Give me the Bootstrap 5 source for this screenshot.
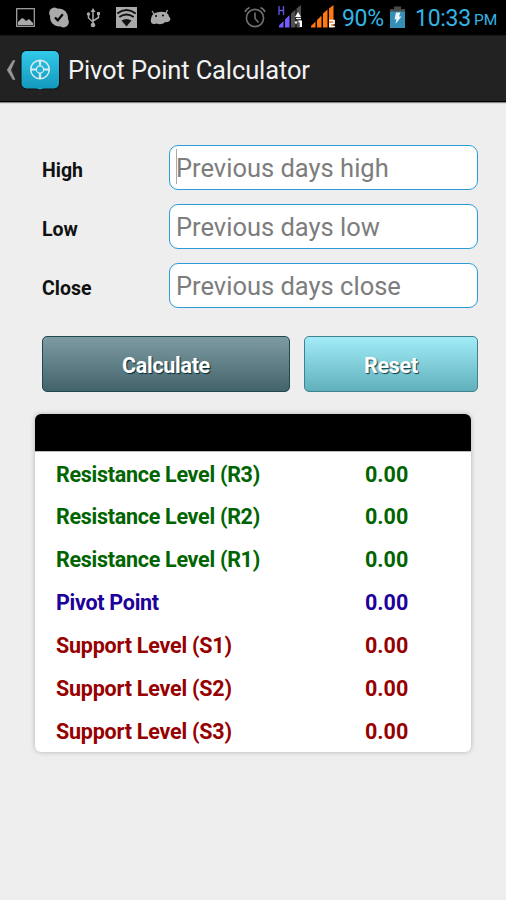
<!DOCTYPE html>
<html lang="en">
<head>
<meta charset="utf-8">
<meta name="viewport" content="width=device-width, initial-scale=1">
<title>Pivot Point Calculator</title>
<link href="https://cdn.jsdelivr.net/npm/bootstrap@5.3.0/dist/css/bootstrap.min.css" rel="stylesheet">
<style>
body{font-family:Roboto,"Liberation Sans",sans-serif;background:#eee;min-height:900px;line-height:1.2;overflow-x:hidden}
svg{display:block;flex:none}
.status-strip{height:36px;background:#000;color:#33b5e5;border-bottom:1px solid #181818;white-space:nowrap}
.status-strip>*{flex:none}
.i-picture{margin-left:15px}.i-check{margin-left:12px}.i-usb{margin-left:16px}.i-wifi{margin-left:14px}
.i-robot{margin-left:13px}.i-alarm{margin-left:72px}.i-sim1{margin-left:11px}.i-sim2{margin-left:8px}.i-battery{margin-left:8px}
.pct{width:40px;margin-left:6px;padding-top:2px;font-size:23px;letter-spacing:-.35px}
.clock{width:54px;margin-left:10px;padding-top:2px;font-size:23px;letter-spacing:-.3px}
.ampm{margin-left:5px;font-size:15.5px;padding-top:6px}
.app-bar{height:66px;background:#222;border-bottom:1.5px solid #000;color:#f3f3f3;box-shadow:0 1px 1px #8a8585}
.app-bar h1{font-size:25.5px;margin:4px 0 0 8px;font-weight:400;letter-spacing:-.12px;white-space:nowrap}
.calc-form{padding:43px 28px 0 42px}
.entry{height:45px;margin-bottom:14px}
.entry label{width:126px;flex:none;font-size:19.5px;font-weight:700;color:#111;padding-top:7px}
.entry .form-control{height:45px;border:1.5px solid #2c9bd6;border-radius:9px;padding:0 0 0 6px;font-size:25.5px;color:#777;background:#fff}
.entry .form-control::placeholder{color:#7d7d7d;opacity:1}
.entry .input-wrap{margin-left:1px}
.caret-wrap::before{content:"";position:absolute;left:7px;top:4px;width:1px;height:35px;background:#aaa;z-index:2}
.actions{gap:14px;margin-top:28px}
.actions .btn{height:56px;border-radius:5px;color:#fff;font-size:21.5px;letter-spacing:-.3px;font-weight:700;padding:4px 0 0}
.btn-calc{width:248px;background:linear-gradient(#7e9ba2,#43636b);border:1px solid #1f484f;text-shadow:1px 1px 1px #002a33}
.btn-clear{width:174px;background:linear-gradient(#a2ecf8,#60b0bb);border:1px solid #41838c;text-shadow:1px 1px 1px #123d45}
.levels{margin:22px 35px 0;width:436px;height:338px;border:0;border-radius:6px;overflow:hidden;box-shadow:0 0 5px rgba(0,0,0,.25)}
.levels-head{height:38px;flex:none;background:#000;border-bottom:1px solid #bbb}
.level{height:42.9px;flex:none;padding:2px 0 0 21px;font-size:21.5px;font-weight:700}
.level span:first-child{width:309px;letter-spacing:-.28px}
.sup span:first-child{letter-spacing:-.22px}
.res{color:#006400}.piv{color:#20009a}.sup{color:#960000}
</style>
</head>
<body>
<div class="status-strip d-flex align-items-center">
<svg class="i-picture" width="21" height="36" viewBox="15 0 21 36"><rect x="16.7" y="8.7" width="17.6" height="17.6" fill="none" stroke="#aaa" stroke-width="1.2"/><path fill="#aaa" d="M18 25v-3l4-4 2 1 2 2 3-2 4 4v2z"/></svg>
<svg class="i-check" width="22" height="36" viewBox="48 0 22 36"><g fill="#aaa"><circle cx="59" cy="17.5" r="9"/><circle cx="54.5" cy="13" r="5.4"/><circle cx="63.5" cy="22" r="5.4"/></g><path d="M55 17.5l2.800 2.800 5-6" fill="none" stroke="#080808" stroke-width="2.2"/></svg>
<svg class="i-usb" width="16" height="36" viewBox="86 0 16 36"><g fill="none" stroke="#aaa" stroke-width="1.5"><path d="M93 25V10M88.5 14v4l4.5 4M98.5 14v3.5L93 21"/></g><g fill="#aaa"><circle cx="93" cy="25" r="2.3"/><path d="M90.5 12L93 8l2.5 4z"/><circle cx="88.5" cy="14" r="1.7"/><path d="M97 12h3v3h-3z"/></g></svg>
<svg class="i-wifi" width="21" height="36" viewBox="116 0 21 36"><path fill="#aaa" d="M116 7h21v21h-21z"/><g fill="none" stroke="#111" stroke-width="2"><path d="M117.3 13.500q9.200-7 18.400 0M119.300 17q7.200-5 14.400 0"/></g><path fill="#111" d="M121.500 20.500q5-3 10 0l-5 6z"/></svg>
<svg class="i-robot" width="21" height="36" viewBox="150 0 21 36"><path d="M154 14l-2-3M166 13l1.500-3" stroke="#aaa" stroke-width="1.200"/><path fill="#aaa" d="M151 19q.5-6.500 8-7 9-1 10 4.500 2.500 2 .500 4.500-1.500 1.500-4 1-4.500 3.500-9 1.500-5 1.500-5.500-1.500-.5-1.500 0-3z"/><circle cx="156" cy="16" r="1" fill="#000"/><circle cx="163" cy="15.500" r="1" fill="#000"/></svg>
<svg class="i-alarm" width="24" height="36" viewBox="243 0 24 36"><g fill="none" stroke="#707070" stroke-width="1.6"><circle cx="255" cy="18" r="8.6"/><path d="M255 12.500v6l3.500 4M245 12q1-3 4.500-4.500M265 12q-1-3-4.500-4.500"/></g></svg>
<svg class="i-sim1" width="25" height="36" viewBox="278 0 25 36"><path d="M279 6v9M283.500 6v9M279 10.500h4.500" stroke="#6257e5" stroke-width="1.300"/><path fill="#755bff" d="M279 27.500v-2l4.500-4.500v6.500zM285 27.500v-8l4.500-4.500v12.500z"/><path fill="#505050" d="M291 27.500v-14l4.500-4v18zM296.500 27.500V8.500L301 5v22.500z"/><path fill="#fff" d="M295 17l3-5 3 5zM296 18h5v1h-5zM298.500 20.500h3.500V27h-2.200v-4.500h-1.300zM294.500 21.500h3l-1.500 3z"/></svg>
<svg class="i-sim2" width="25" height="36" viewBox="311 0 25 36"><path fill="#ff7811" d="M311 27.500v-1.500l4.500-4.500v6zM317 27.500v-7.500l4.500-4.500v12zM323 27.500v-14l4.500-4v18zM329 27.500V8.500l4.500-3.500v22.500z"/><path d="M329 20.500h5v3h-4v3h5" fill="none" stroke="#fff" stroke-width="1.700"/></svg>
<span class="pct">90%</span>
<svg class="i-battery" width="15" height="36" viewBox="390 0 15 36"><path fill="#4a4a4a" d="M394 6.500h7V9h4v3h-15V9h4z"/><path fill="#348eb5" d="M390 11.500h15V28h-15z"/><path fill="#e8f6fc" d="M396 12.500h4.500l-1.500 4h2.500l-6 7.500 1-5-2 .500z"/></svg>
<span class="clock">10:33</span><span class="ampm">PM</span>
</div>
<header class="app-bar d-flex align-items-center">
<svg width="60" height="64" viewBox="0 36 60 64"><defs><linearGradient id="tile" x1="0" y1="0" x2="0" y2="1"><stop stop-color="#32c9e8"/><stop offset="1" stop-color="#1399bd"/></linearGradient></defs><path d="M13.800 59.500h1.900L11.500 69l4.200 9.500h-1.900L8 69z" transform="translate(-.8)" fill="#999" stroke="#999" stroke-width=".6"/><rect x="20.500" y="49" width="39.500" height="39.500" rx="6" fill="#101010"/><rect x="21.500" y="50" width="37.500" height="37.500" rx="5" fill="url(#tile)"/><path d="M36 87h8l-4 1.500z" fill="#1ca6ca"/><g fill="none" stroke="#d8eef3"><circle cx="40" cy="68.500" r="9.300" stroke-width="1.500"/><circle cx="40" cy="68.500" r="3.600" stroke-width="1.200"/><path d="M40 59v5.500M40 72.500V78M30.500 68.500H36M44 68.500h5.500" stroke-width="2.200"/></g></svg>
<h1>Pivot Point Calculator</h1>
</header>
<main>
<form class="calc-form">
<div class="entry d-flex align-items-center"><label for="high">High</label><div class="input-wrap caret-wrap position-relative flex-grow-1"><input id="high" class="form-control" placeholder="Previous days high"></div></div>
<div class="entry d-flex align-items-center"><label for="low">Low</label><div class="input-wrap flex-grow-1"><input id="low" class="form-control" placeholder="Previous days low"></div></div>
<div class="entry d-flex align-items-center"><label for="close">Close</label><div class="input-wrap flex-grow-1"><input id="close" class="form-control" placeholder="Previous days close"></div></div>
<div class="actions d-flex"><button type="button" class="btn btn-calc">Calculate</button><button type="reset" class="btn btn-clear">Reset</button></div>
</form>
<section class="card levels">
<div class="levels-head"></div>
<div class="level res d-flex align-items-center"><span>Resistance Level (R3)</span><span>0.00</span></div>
<div class="level res d-flex align-items-center"><span>Resistance Level (R2)</span><span>0.00</span></div>
<div class="level res d-flex align-items-center"><span>Resistance Level (R1)</span><span>0.00</span></div>
<div class="level piv d-flex align-items-center"><span>Pivot Point</span><span>0.00</span></div>
<div class="level sup d-flex align-items-center"><span>Support Level (S1)</span><span>0.00</span></div>
<div class="level sup d-flex align-items-center"><span>Support Level (S2)</span><span>0.00</span></div>
<div class="level sup d-flex align-items-center"><span>Support Level (S3)</span><span>0.00</span></div>
</section>
</main>
<script src="https://cdn.jsdelivr.net/npm/bootstrap@5.3.0/dist/js/bootstrap.bundle.min.js"></script>
</body>
</html>
